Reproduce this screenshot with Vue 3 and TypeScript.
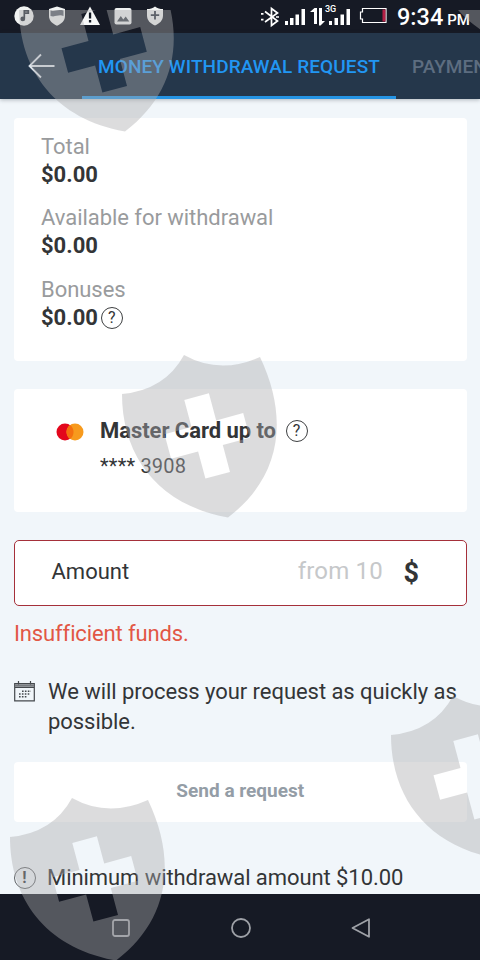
<script setup lang="ts">
interface Balance {
  label: string
  value: string
  help: boolean
}

const balances: Balance[] = [
  { label: 'Total', value: '$0.00', help: false },
  { label: 'Available for withdrawal', value: '$0.00', help: false },
  { label: 'Bonuses', value: '$0.00', help: true },
]

const shields: string[] = [
  'translate(-103 -386)',
  'translate(0 0)',
  'translate(269 341)',
  'translate(-112 443)',
  'translate(307 -467)',
]
</script>

<template>
  <div class="screen">
    <header class="status">
      <div class="notices">
        <svg width="20" height="20" viewBox="0 0 20 20">
          <circle cx="10" cy="10" r="9.7" fill="#f1f3f2" />
          <path d="M10.300 12.500V4.800h4v2.400h-4" fill="none" stroke="#20262f" stroke-width="1.7" />
          <circle cx="8.800" cy="12.900" r="2.400" fill="#20262f" />
        </svg>
        <svg width="18" height="20" viewBox="0 0 18 20">
          <path d="M9 .5 17 3v7c0 4.600-3.500 8-8 9.700C4.500 18 1 14.600 1 10V3z" fill="#f1f3f2" />
          <path d="M2.500 4.500c4 1.500 6-1.500 13 0v5.500c-5-2-8 1.500-13 0z" fill="#59606a" />
        </svg>
        <svg width="20" height="20" viewBox="0 0 20 20">
          <path d="M10 .5 20 19H0z" fill="#f7f8f8" />
          <path d="M8.900 6.500h2.300v6H8.900zM8.900 14h2.300v2.400H8.900z" fill="#111722" />
        </svg>
        <svg width="18" height="20" viewBox="0 0 18 20">
          <rect x=".5" y="2" width="17" height="16.500" rx="2" fill="#eef0f0" />
          <path d="M3 15.500 6.800 10l2.500 3.500 2.400-3L15.300 15.500z" fill="#3b424a" />
        </svg>
        <svg width="18" height="20" viewBox="0 0 18 20">
          <path d="M9 .5c2.500 2 5 2.500 8 2.500v6.500c0 5-3.500 8-8 10-4.500-2-8-5-8-10V3c3 0 5.500-.5 8-2.500z" fill="#f1f3f2" />
          <path d="M9 5v8.500M4.800 9.200h8.400" stroke="#252d38" stroke-width="1.800" />
        </svg>
      </div>
      <svg class="radio" width="130" height="32" viewBox="0 0 130 32">
        <path d="m4 11.500 12.500 9.500-6 4.500v-17l6 4.500L4 22M0 13.800h2.500M0 19.700h2.500M15 17h3" fill="none" stroke="#fff" stroke-width="1.700" />
        <g fill="#fff">
          <path d="M24 21h3v4h-3zM29 18h3.500v7H29zM34.500 14.500H38V25h-3.500zM40.500 9H44v16h-3.500z" />
          <path d="M53.500 8H56v16h-3v-12h-4zM58 8h3v13h3l-4.500 4.500H58z" />
          <path d="M68 21h3v4h-3zM73.500 18H77v7h-3.500zM79.500 14.500H83V25h-3.500zM85.500 9H89v16h-3.500z" />
          <text class="net" x="64" y="12">3G</text>
        </g>
        <path d="M101.500 8.500h23.500v14h-23.500v-3.500h-2v-7h2z" fill="none" stroke="#fff" stroke-width="1.200" />
        <path d="M121.500 9.500h3v12h-3z" fill="#b51f45" />
      </svg>
      <div class="clock"><span>9:34</span><span class="half">PM</span></div>
    </header>

    <nav class="tabs">
      <svg class="back" width="28" height="26" viewBox="0 0 28 26">
        <path d="M26.500 13H2M13 1.500 1.500 13 13 24.500" fill="none" stroke="#dce3ea" stroke-width="1.800" />
      </svg>
      <div class="tab active">MONEY WITHDRAWAL REQUEST</div>
      <div class="tab">PAYMENTS</div>
    </nav>

    <main class="content">
      <section class="card balances">
        <div v-for="item in balances" :key="item.label" class="balance">
          <div class="label">{{ item.label }}</div>
          <div class="value">
            {{ item.value }}
            <span v-if="item.help" class="help">?</span>
          </div>
        </div>
      </section>

      <section class="card method">
        <svg class="brand" width="28" height="18" viewBox="0 0 28 18">
          <circle cx="9" cy="9" r="8.500" fill="#e3071c" />
          <circle cx="19" cy="9" r="8.500" fill="#f79a1d" />
          <path d="M14 2.100a8.500 8.500 0 0 1 0 13.800 8.500 8.500 0 0 1 0-13.800z" fill="#f4700f" />
        </svg>
        <div class="details">
          <div class="name"><span class="title">Master Card up to</span> <span class="help">?</span></div>
          <div class="number">**** 3908</div>
        </div>
      </section>

      <section class="amount">
        <span class="caption">Amount</span>
        <span class="hint">from 10</span>
        <span class="currency">$</span>
      </section>
      <p class="error">Insufficient funds.</p>

      <div class="note">
        <svg width="21" height="21" viewBox="0 0 21 21">
          <path d="M.7 2.500h19.600v17.300H.7zM.7 6.500h19.600M4.500 0v4M16.500 0v4" fill="none" stroke="#45494d" stroke-width="1.200" />
          <path d="M1 4.500h19" stroke="#777b7f" stroke-width="2.600" />
          <path d="M8 10.200h9M5 13h11M5 15.800h8" stroke="#45494d" stroke-width="1.600" stroke-dasharray="1.600 1.300" />
        </svg>
        <p>We will process your request as quickly as possible.</p>
      </div>

      <div class="card send">Send a request</div>

      <div class="minimum">
        <span class="help bang">!</span>
        <span>Minimum withdrawal amount $10.00</span>
      </div>
    </main>

    <footer class="system">
      <svg width="24" height="24" viewBox="0 0 24 24">
        <rect x="4" y="4" width="16" height="16" rx="2" />
      </svg>
      <svg width="24" height="24" viewBox="0 0 24 24">
        <circle cx="12" cy="12" r="9" />
      </svg>
      <svg width="24" height="24" viewBox="0 0 24 24">
        <path d="M20 3.200v17.600L3.500 12z" stroke-linejoin="round" />
      </svg>
    </footer>

    <svg class="shields" width="480" height="950" viewBox="0 10 480 950">
      <path
        v-for="place in shields"
        :key="place"
        :transform="place"
        fill-rule="evenodd"
        d="M122 394Q165 390 184 355Q220 375 260 357C290 420 280 478 228 517.500C158 505 122 456 122 394ZM184.300 399.900l24.600-6.600 7.300 27.100 27-7.300 6.600 24.600-27 7.300 7.200 27-24.600 6.600-7.300-27-27 7.200-6.600-24.600 27-7.200z"
      />
    </svg>
  </div>
</template>

<style>
body {
  margin: 0;
}
</style>

<style scoped>
.screen {
  position: relative;
  display: flex;
  flex-direction: column;
  width: 480px;
  height: 960px;
  overflow: hidden;
  background: #f1f6fa;
  color: #333537;
  font-family: Roboto, 'Liberation Sans', sans-serif;
}
.status {
  display: flex;
  flex: none;
  height: 33px;
  box-sizing: border-box;
  padding: 0 10px 0 14px;
  background: #161a25;
  color: #fff;
}
.notices {
  display: flex;
  flex: none;
  gap: 14px;
  width: 247px;
  padding-top: 6px;
}
.radio {
  flex: none;
}
.net {
  font-size: 9px;
  font-weight: 500;
}
.clock {
  display: flex;
  flex: 1;
  align-items: baseline;
  gap: 4px;
  padding-left: 6px;
  font-size: 23.500px;
  font-weight: 500;
  line-height: 35px;
  white-space: nowrap;
}
.half {
  font-size: 15px;
}
.tabs {
  display: flex;
  flex: none;
  height: 66px;
  overflow: hidden;
  background: #25374b;
  box-shadow: 0 1px 4px rgba(30, 40, 50, 0.3);
}
.back {
  flex: none;
  margin: 20px 26.500px 0 27.500px;
}
.tab {
  flex: none;
  box-sizing: border-box;
  height: 66px;
  padding: 0 16px;
  color: #5d6d80;
  font-size: 19px;
  font-weight: 500;
  line-height: 67px;
  white-space: nowrap;
}
.active {
  width: 314px;
  border-bottom: 3px solid #2594e4;
  color: #2196f3;
  letter-spacing: 0.1px;
}
.content {
  display: flex;
  flex: 1;
  flex-direction: column;
  min-height: 0;
  padding: 19px 13px 0 13.500px;
  font-size: 22px;
}
.card {
  flex: none;
  box-sizing: border-box;
  border-radius: 4px;
  background: #fff;
}
.balances {
  height: 243px;
  padding: 15px 27.500px;
}
.balance {
  height: 71.400px;
}
.label {
  color: #999b9d;
  letter-spacing: -0.04px;
  line-height: 28px;
}
.value {
  display: flex;
  align-items: center;
  gap: 3px;
  font-weight: 700;
  line-height: 28px;
}
.help {
  display: flex;
  flex: none;
  align-items: center;
  justify-content: center;
  box-sizing: border-box;
  width: 22px;
  height: 22px;
  border: 1.500px solid #3d3f41;
  border-radius: 50%;
  font-size: 16px;
  font-weight: 400;
  line-height: 1;
}
.method {
  display: flex;
  height: 123px;
  margin-top: 28px;
  padding: 24px 42px;
}
.brand {
  flex: none;
  margin: 10px 16.500px 0 0;
}
.name {
  display: flex;
  align-items: center;
  gap: 10px;
  font-weight: 700;
  line-height: 36px;
}
.title {
  width: 175.500px;
  letter-spacing: -0.05px;
  white-space: nowrap;
}
.number {
  font-size: 20px;
  letter-spacing: 0.200px;
  line-height: 34px;
}
.amount {
  display: flex;
  flex: none;
  align-items: center;
  box-sizing: border-box;
  height: 66px;
  margin-top: 28px;
  padding: 0 47px 3px 37px;
  border: 1.500px solid #a5303a;
  border-radius: 5px;
  background: #fff;
}
.hint {
  margin-left: auto;
  padding-bottom: 1px;
  color: #c6c8ca;
  font-size: 24px;
  letter-spacing: 0.200px;
}
.currency {
  margin-left: 20.500px;
  padding-top: 2px;
  font-size: 27px;
  font-weight: 700;
}
.error {
  margin: 13px 1px 0 0.500px;
  color: #e25745;
  letter-spacing: -0.130px;
  line-height: 30px;
}
.note {
  display: flex;
  gap: 13.500px;
  margin-top: 28px;
}
.note svg {
  flex: none;
  margin-top: 4px;
}
.note p {
  margin: 0 -10px 0 0;
  letter-spacing: -0.050px;
  line-height: 30px;
}
.send {
  height: 60px;
  margin-top: 25px;
  color: #949da6;
  font-size: 19px;
  font-weight: 700;
  line-height: 58px;
  text-align: center;
}
.minimum {
  display: flex;
  align-items: center;
  gap: 11.500px;
  margin-top: 41px;
  letter-spacing: -0.070px;
  line-height: 30px;
  white-space: nowrap;
}
.bang {
  border-color: #606366;
  font-weight: 700;
}
.system {
  display: flex;
  flex: none;
  justify-content: center;
  gap: 96px;
  box-sizing: border-box;
  height: 66px;
  padding: 22px 0 0 2px;
  background: #161a25;
}
.system svg {
  fill: none;
  stroke: #9ea1a7;
  stroke-width: 1.800px;
}
.shields {
  position: absolute;
  top: 10px;
  left: 0;
  fill: rgba(171, 172, 174, 0.42);
  pointer-events: none;
}
</style>
